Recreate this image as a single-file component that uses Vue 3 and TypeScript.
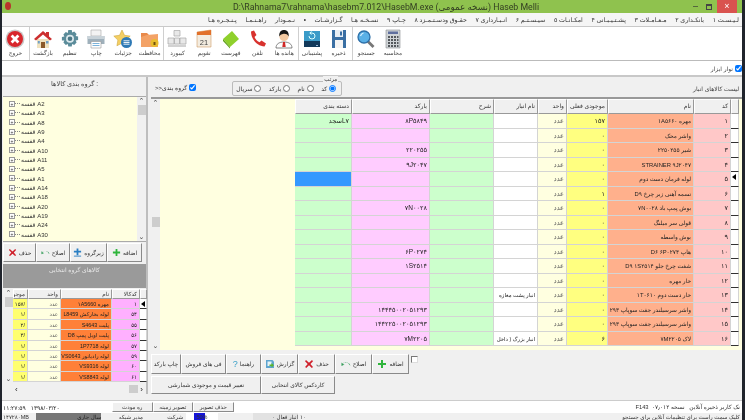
<script setup lang="ts">
interface Tool { label: string; icon: string }
interface Row { code: string; name: string; qty: string; store?: string; barcode?: string; category?: string; selected?: boolean }

const icons: Record<string, string> = {
  exit: '<circle cx="10" cy="10" r="9.500" fill="#c9c9c9"/><circle cx="10" cy="10" r="8" fill="#d8262c"/><path d="M6.600 6.600l6.800 6.800M13.400 6.600l-6.800 6.800" stroke="#fff" stroke-width="2.800"/>',
  home: '<path d="M4 10h12v9H4z" fill="#efe2bf"/><path d="M1 10L10 2l3 2.600V3h3v4.400L19 10l-2 1.600L10 5.600 3 11.600z" fill="#cc2f2f"/><path d="M8 13h4v6H8z" fill="#8a5a2b"/><path d="M13 12h2.500v2.500H13zM4.800 12h2v2.500h-2z" fill="#6d9fc9"/>',
  gear: '<path d="M8.300 1h3.400l.5 2.500 2-.9 2.400 2.400-1 2 2.500.5v3.400l-2.500.6 1 2-2.400 2.400-2-1-.5 2.600H8.300l-.5-2.600-2 1-2.400-2.400 1-2L1.900 11.400V8l2.500-.5-1-2L5.800 3.100l2 .9z" fill="#5b8c9a"/><circle cx="10" cy="9.700" r="4" fill="#dbe8ec"/><circle cx="10" cy="9.700" r="2.300" fill="#4b7886"/>',
  print: '<path d="M5 1h10v6H5z" fill="#f3f3f3" stroke="#aaa" stroke-width=".6"/><path d="M1.500 7h17v8h-17z" fill="#9fb0bb"/><path d="M1.500 7h17v3h-17z" fill="#c8d2d8"/><path d="M5 12.500h10V19H5z" fill="#fff" stroke="#999" stroke-width=".6"/><path d="M6.500 14.500h7M6.500 16.500h7" stroke="#5aa0d0" stroke-width=".8"/>',
  star: '<path d="M9 1l2.500 5.300 5.700.8-4.100 4 1 5.700L9 14.100l-5.100 2.700 1-5.700-4.100-4 5.700-.8z" fill="#f4cf63" stroke="#c79a2a" stroke-width=".5"/><circle cx="13.500" cy="13.500" r="5.500" fill="#2e79b5"/><path d="M10.500 11.800h6M10.500 13.500h6M10.500 15.200h6" stroke="#fff" stroke-width=".9"/>',
  folder: '<path d="M1 4h6l2 2h9v12H1z" fill="#e98a4b"/><path d="M1 8l6-2 11-1v13H1z" fill="#f3a267"/><circle cx="14.500" cy="14" r="4" fill="#e8bd2e"/><path d="M13.500 13h2v3h-2z" fill="#70500f"/>',
  keys: '<path d="M7 1.500h6V7H7zM1 9h6v6H1zM7.500 9h5v6h-5zM13 9h6v6h-6z" fill="#e8e8e8" stroke="#a8a8a8" stroke-width=".7"/><path d="M1 15.500h18V18H1z" fill="#d2d2d2"/>',
  calendar: '<path d="M3 3l14-2v17H3z" fill="#f3ece0" stroke="#c78a4a" stroke-width=".5"/><path d="M3 3l14-2v5H3z" fill="#e2702a"/><text x="10" y="15.500" font-size="7.500" text-anchor="middle" fill="#444" font-family="Liberation Sans">21</text>',
  list: '<path d="M2 10L11 2l7 8-9 8z" fill="#8fd02c"/><path d="M2 10l7 8v1.500L2 12z" fill="#5f9e18"/>',
  phone: '<path d="M3 2.500l3-1 2.500 4.500-2 2c.8 2 2.500 4 5 5.300l2-1.800 4.500 3-1.500 3c-7-.6-13.500-7-13.500-15z" fill="#d8322e"/>',
  person: '<path d="M2 19c0-4 3-6 8-6s8 2 8 6z" fill="#fff" stroke="#555" stroke-width=".7"/><path d="M9 13h2l.7 5H8.300z" fill="#d02828"/><circle cx="10" cy="7.500" r="4.600" fill="#f2c8a0"/><path d="M5.200 7.500C5 3 7 1 10 1s5 2 4.800 6.500C13.500 5 11 4.600 9 5c-1.500.3-3 1-3.800 2.500z" fill="#151515"/>',
  backup: '<path d="M2 2h16v11H2z" fill="#3a9bc8"/><path d="M2 12h16v6H2z" fill="#12395a"/><path d="M14 16h2v1h-2z" fill="#9bd"/><path d="M7 7a3 3 0 1 0 3-3H8M9.500 2.500L7.800 4l1.700 1.500" fill="none" stroke="#dff" stroke-width="1"/>',
  save: '<path d="M3 1h14v18H3z" fill="#3a6fa3"/><path d="M6 1h8v7H6z" fill="#e8eef4"/><path d="M11 2.500h2v4h-2z" fill="#3a6fa3"/><path d="M6 11h8v8H6z" fill="#f4f4f4"/>',
  search: '<path d="M11.500 12l6 6" stroke="#777" stroke-width="2.800"/><circle cx="8" cy="8" r="6" fill="#5ab0e6" stroke="#2d6fa8" stroke-width="1.300"/><path d="M4.500 7a4 4 0 0 1 3-3" stroke="#d8f0ff" stroke-width="1.200" fill="none"/>',
  calc: '<path d="M3 1h14v18H3z" fill="#cfd3d6" stroke="#8b8f92" stroke-width=".6"/><path d="M5 2.500h10v2.500H5z" fill="#5f6f9e"/><path d="M5 7h2v2H5zM8 7h2v2H8zM11 7h2v2h-2zM14 7h1.500v2H14zM5 10h2v2H5zM8 10h2v2H8zM11 10h2v2h-2zM14 10h1.500v2H14zM5 13h2v2H5zM8 13h2v2H8zM11 13h2v2h-2zM14 13h1.500v2H14zM5 16h2v2H5zM8 16h2v2H8zM11 16h2v2h-2zM14 16h1.500v2H14z" fill="#54585c"/>',
  plus: '<path d="M8 2h4v6h6v4h-6v6H8v-6H2V8h6z" fill="#2fb53c"/>',
  plusBlue: '<path d="M8 1h4v5h6v4h-6v6H8v-6H2V6h6z" fill="#2a7fc4"/><path d="M2 17h16v2H2z" fill="#2a7fc4"/>',
  cross: '<path d="M4 2l6 5.500L16 2l2 2.500L12.800 10l5.200 6-2.300 2-5.700-5.500L4.500 18l-2.300-2 5.200-6L2 4.500z" fill="#cf1f2a"/>',
  undo: '<path d="M3 12a8 8 0 0 1 14-2l-4 1 6 3v-7l-2 2A10 10 0 0 0 1 13z" fill="#2f9a55" transform="matrix(-1 0 0 1 20 0)"/>',
  report: '<path d="M2 2h13l3 3v13H2z" fill="#5fa5cf"/><path d="M5 5h8v9H5z" fill="#e6f2f8"/><path d="M9 11h4V8l5 4.500-5 4.500v-3H9z" fill="#5ab52e"/>',
}

const toolGroups: Tool[][] = [
  [{ label: 'خروج', icon: 'exit' }],
  [
    { label: 'بازگشت', icon: 'home' },
    { label: 'تنظیم', icon: 'gear' },
    { label: 'چاپ', icon: 'print' },
    { label: 'جزئیات', icon: 'star' },
    { label: 'محافظت', icon: 'folder' },
  ],
  [
    { label: 'کیبورد', icon: 'keys' },
    { label: 'تقویم', icon: 'calendar' },
    { label: 'فهرست', icon: 'list' },
    { label: 'تلفن', icon: 'phone' },
    { label: 'هانده ها', icon: 'person' },
  ],
  [
    { label: 'پشتیبانی', icon: 'backup' },
    { label: 'ذخیره', icon: 'save' },
  ],
  [
    { label: 'جستجو', icon: 'search' },
    { label: 'محاسبه', icon: 'calc' },
  ],
]

const menu = ['لـیـسـت ۱', 'بانکـداری ۲', 'مـعـامـلات ۳', 'پشـتـیـبـانی ۴', 'امکـانـات ۵', 'سیـسـتـم ۶', 'انـبـارداری ۷', 'حقـوق ودسـتـمـزد ۸', 'چـاپ ۹', 'نسـخـه هـا', 'گـزارشـات', '•', 'نـمـودار', 'راهـنـمـا', 'پـنـجـره هـا']

const shelves = ['A2', 'A3', 'A8', 'A9', 'A4', 'A10', 'A11', 'A5', 'A1', 'A14', 'A18', 'A20', 'A19', 'A24', 'A30', 'A32']

const rows: Row[] = [
  { code: '۱', name: 'مهره ۱A۵۶۶۰', qty: '۱۵۷', barcode: '۸P۵۸۴۹', category: 'L۷سجد' },
  { code: '۲', name: 'واشر محک', qty: '۰' },
  { code: '۳', name: 'شیر ۲۲۵۰۲۵۵', qty: '۰', barcode: '۲۲۰۲۵۵' },
  { code: '۴', name: 'STRAINER ۹J۲۰۴۷', qty: '۰', barcode: '۹J۲۰۴۷' },
  { code: '۵', name: 'لوله فرمان دست دوم', qty: '۰', selected: true },
  { code: '۶', name: 'تسمه آهنی زیر چرخ D۹', qty: '۱' },
  { code: '۷', name: 'بوش پمپ باد ۷N۰۰۲۸', qty: '۰', barcode: '۷N۰۰۲۸' },
  { code: '۸', name: 'قولی سر میلنگ', qty: '۰' },
  { code: '۹', name: 'بوش واسطه', qty: '۰' },
  { code: '۱۰', name: 'هاپ D۶ ۶P۰۲۷۴', qty: '۰', barcode: '۶P۰۲۷۴' },
  { code: '۱۱', name: 'شفت چرخ جلو D۹ ۱S۲۵۱۴', qty: '۰', barcode: '۱S۲۵۱۴' },
  { code: '۱۲', name: 'خار مهره', qty: '۰' },
  { code: '۱۳', name: 'خار دست دوم ۱T۰۶۱۰', qty: '۰', store: 'انبار پشت مغازه' },
  { code: '۱۴', name: 'واشر سرسیلندر جفت سوپاپ ۲۹۳', qty: '۰', barcode: '۱۴۴۴۵۰۰۲۰۵۱۲۹۳' },
  { code: '۱۵', name: 'واشر سرسیلندر جفت سوپاپ ۲۹۳', qty: '۰', barcode: '۱۴۴۲۲۵۰۰۲۰۵۱۲۹۳' },
  { code: '۱۶', name: 'لاک ۷M۲۲۰۵', qty: '۶', store: 'انبار بزرگ ( داخل', barcode: '۷M۲۲۰۵' },
]

const groupRows = [
  { code: '۱', name: 'مهره ۱A5660', qty: '/۱۵۷' },
  { code: '۵۴', name: 'لوله بخارکش L8459', qty: '/۱' },
  { code: '۵۵', name: 'پلیت S4643', qty: '/۲' },
  { code: '۵۶', name: 'پلیت اویل پمپ D8', qty: '/۳' },
  { code: '۵۷', name: 'لوله 1P7718', qty: '/۱' },
  { code: '۵۹', name: 'لوله رادیاتور VS0643', qty: '/۱' },
  { code: '۶۰', name: 'لوله VS9316', qty: '/۱' },
  { code: '۶۱', name: 'لوله VS8843', qty: '/۱' },
]

const gridHeads = ['دسته بندی', 'بارکد', 'شرح', 'نام انبار', 'واحد', 'موجودی فعلی', 'نام', 'کد']
const groupHeads = ['موجو', 'واحد', 'نام', 'کدکالا']
const treeButtons = [
  { label: 'حذف', icon: 'cross' },
  { label: 'اصلاح', icon: 'undo' },
  { label: 'زیرگروه', icon: 'plusBlue' },
  { label: 'اضافه', icon: 'plus' },
]
const actions = [
  { label: 'چاپ بارکد' },
  { label: 'فی های فروش' },
  { label: 'راهنما', mark: '?' },
  { label: 'گزارش', icon: 'report' },
  { label: 'حذف', icon: 'cross' },
  { label: 'اصلاح', icon: 'undo' },
  { label: 'اضافه', icon: 'plus' },
]
const radios = [
  { label: 'سریال', on: false },
  { label: 'بارکد', on: false },
  { label: 'نام', on: false },
  { label: 'کد', on: true },
]
</script>

<template>
  <div class="desktop">
    <div class="window">
      <header class="titlebar">
        <span class="app-dot"></span>
        <span class="title-text">D:\Rahnama7\rahnama\hasebm7.012\HasebM.exe (نسخه عمومی) Haseb Melli</span>
        <div class="win-controls">
          <span class="win-btn">–</span>
          <span class="win-btn restore"></span>
          <span class="win-btn close">×</span>
        </div>
      </header>

      <nav class="menu">
        <span v-for="m in menu" :key="m">{{ m }}</span>
      </nav>

      <div class="toolbar">
        <div v-for="(group, i) in toolGroups" :key="i" class="tool-group">
          <div v-for="t in group" :key="t.label" class="tool">
            <svg viewBox="0 0 20 20" width="20" height="20" v-html="icons[t.icon]"></svg>
            <span>{{ t.label }}</span>
          </div>
        </div>
      </div>

      <div class="toolbar-toggle">
        <span>نوار ابزار</span>
        <input type="checkbox" checked />
      </div>

      <main class="main">
        <aside class="left">
          <div class="left-head">گروه بندی کالاها :</div>
          <div class="tree">
            <div class="tree-list">
              <div v-for="s in shelves" :key="s" class="tree-row">
                <span class="expander">+</span>
                <span class="dash"></span>
                <span dir="rtl">{{ s }} قفسه</span>
              </div>
            </div>
            <div class="vscroll">
              <span class="arrow">⌃</span>
              <span class="thumb top"></span>
              <span class="arrow down">⌄</span>
            </div>
          </div>
          <div class="tree-buttons">
            <button v-for="b in treeButtons" :key="b.label" class="btn">
              <svg viewBox="0 0 20 20" width="9" height="9" v-html="icons[b.icon]"></svg>
              {{ b.label }}
            </button>
          </div>
          <div class="group-title">کالاهای گروه انتخابی</div>
          <div class="group-grid">
            <div class="group-scroll">
              <span class="arrow">⌃</span>
              <span class="thumb"></span>
              <span class="arrow down">⌄</span>
            </div>
            <div class="group-table">
              <div v-for="h in groupHeads" :key="h" class="head">{{ h }}</div>
              <div class="head blank"></div>
              <template v-for="(r, i) in groupRows" :key="r.code">
                <div class="gc qty">{{ r.qty }}</div>
                <div class="gc unit">عدد</div>
                <div class="gc gname">{{ r.name }}</div>
                <div class="gc gcode">{{ r.code }}</div>
                <div class="gc mark"><i v-if="i === 0"></i></div>
              </template>
            </div>
          </div>
          <div class="hscroll">
            <span>‹</span>
            <span class="hthumb"></span>
            <span>›</span>
          </div>
        </aside>

        <section class="right">
          <div class="right-head">
            <label class="group-check">
              <span dir="rtl">گروه بندی&lt;&lt;</span>
              <input type="checkbox" checked />
            </label>
            <fieldset class="sort">
              <legend>مرتب</legend>
              <label v-for="r in radios" :key="r.label">
                <span>{{ r.label }}</span>
                <input type="radio" name="sort" :checked="r.on" />
              </label>
            </fieldset>
            <div class="list-title">لیست کالاهای انبار</div>
          </div>

          <div class="grid-wrap">
            <div class="side-scroll">
              <span class="arrow">⌃</span>
              <span class="thumb mid"></span>
              <span class="arrow down">⌄</span>
            </div>
            <div class="empty"></div>
            <div class="items">
              <div v-for="h in gridHeads" :key="h" class="head">{{ h }}</div>
              <div class="head blank"></div>
              <template v-for="r in rows" :key="r.code">
                <div class="c category" :class="{ selected: r.selected }">{{ r.category }}</div>
                <div class="c barcode">{{ r.barcode }}</div>
                <div class="c desc"></div>
                <div class="c store">{{ r.store }}</div>
                <div class="c unit">عدد</div>
                <div class="c stock">{{ r.qty }}</div>
                <div class="c iname">{{ r.name }}</div>
                <div class="c icode">{{ r.code }}</div>
                <div class="c mark"><i v-if="r.selected"></i></div>
              </template>
            </div>
          </div>

          <div class="actions">
            <div class="action-grid">
              <button v-for="a in actions" :key="a.label" class="btn">
                <span v-if="a.mark" class="help">{{ a.mark }}</span>
                <svg v-if="a.icon" viewBox="0 0 20 20" width="10" height="10" v-html="icons[a.icon]"></svg>
                {{ a.label }}
              </button>
              <button class="btn wide-a">تغییر قیمت و موجودی شمارشی</button>
              <button class="btn wide-b">کاردکس کالای انتخابی</button>
            </div>
            <input class="action-check" type="checkbox" />
          </div>
        </section>
      </main>

      <div class="strip">
        <span class="clock">۱۱:۲۷:۵۹ &nbsp; ۱۳۹۸/۰۳/۲۰</span>
        <button class="btn small">ره مودت</button>
        <button class="btn small">تصویر زمینه</button>
        <button class="btn small">حذف تصویر</button>
        <span class="version" dir="rtl">نک کاربر ذخیره آنلاین &nbsp; نسخه ۰۷٫۰۱۲ &nbsp;F143</span>
      </div>

      <footer class="status">
        <span class="s-size">۱۴۷۲۸۰MB</span>
        <span class="s-year">سال جاری</span>
        <span class="s-admin">مدیر شبکه</span>
        <span class="s-co">شرکت</span>
        <span class="s-progress"><i></i>50%</span>
        <span class="s-store">انبار فعال ۰</span>
        <span class="s-num">۱۰</span>
        <span class="s-hint" dir="rtl">کلیک سمت راست برای تنظیمات آنلاین برای جستجو</span>
      </footer>
    </div>
  </div>
</template>

<style scoped>
.desktop {
  width: 745px;
  height: 420px;
  overflow: hidden;
  padding: 0 3px 0 2px;
  box-sizing: border-box;
  background: #20242c;
  font-family: "Liberation Sans", "DejaVu Sans", sans-serif;
  font-size: 7px;
  color: #222;
  filter: blur(0.3px);
}
.window {
  height: 420px;
  display: flex;
  flex-direction: column;
  background: #f0f0f0;
}
.titlebar {
  height: 13px;
  flex: none;
  position: relative;
  display: flex;
  align-items: center;
  justify-content: center;
  background: #8fc24e;
  color: #333f22;
}
.title-text {
  font-family: Roboto, "DejaVu Sans", sans-serif;
  font-size: 8.75px;
  margin-left: 28px;
}
.app-dot {
  position: absolute;
  left: 3px;
  top: 2px;
  width: 6px;
  height: 8px;
  border-radius: 50%;
  background: #b8342c;
}
.win-controls {
  position: absolute;
  right: 0;
  top: 0;
  height: 13px;
  display: flex;
}
.win-btn {
  width: 13px;
  text-align: center;
  font-size: 9px;
  line-height: 13px;
  color: #333;
}
.win-btn.restore {
  position: relative;
}
.win-btn.restore::after {
  content: "";
  position: absolute;
  left: 4px;
  top: 4px;
  width: 4px;
  height: 3px;
  border: 1px solid #444;
  border-top-width: 2px;
}
.win-btn.close {
  width: 20px;
  margin: 0 5px 0 2px;
  background: #d9534f;
  color: #fff;
}
.menu {
  height: 14px;
  flex: none;
  display: flex;
  direction: rtl;
  align-items: center;
  gap: 8.6px;
  padding-right: 3px;
  background: #f5f5f5;
  border-bottom: 1px solid #c9c9c9;
  box-sizing: border-box;
  font-size: 6.3px;
  color: #333;
  white-space: nowrap;
}
.toolbar {
  height: 34px;
  flex: none;
  display: flex;
  background: #fff;
  border-bottom: 1px solid #bbb;
  box-sizing: border-box;
}
.tool-group {
  display: flex;
  border-right: 1px solid #cfcfcf;
  padding-top: 2px;
}
.tool-group:last-child {
  border-right: 0;
}
.tool {
  width: 26.7px;
  display: flex;
  flex-direction: column;
  align-items: center;
  font-size: 5.8px;
  color: #444;
  white-space: nowrap;
}
.tool span {
  margin-top: 1px;
}
.toolbar-toggle {
  height: 14px;
  flex: none;
  display: flex;
  justify-content: flex-end;
  align-items: center;
  gap: 2px;
  background: #fff;
  font-size: 6px;
  color: #444;
}
input[type="checkbox"],
input[type="radio"] {
  width: 7px;
  height: 7px;
  margin: 0;
  flex: none;
}
.main {
  height: 319px;
  flex: none;
  display: flex;
  gap: 2px;
  border-top: 2px solid #c8c8c8;
  box-sizing: border-box;
}
.left {
  width: 146px;
  flex: none;
  border-right: 2px solid #bdbdbd;
  box-sizing: border-box;
  padding-left: 1px;
  display: flex;
  flex-direction: column;
}
.left-head {
  height: 20px;
  flex: none;
  text-align: center;
  padding-top: 3px;
  box-sizing: border-box;
  font-size: 6.5px;
  color: #444;
  border-bottom: 1px solid #aaa;
}
.tree {
  height: 144px;
  flex: none;
  display: flex;
  overflow: hidden;
}
.tree-list {
  flex: 1;
  background: #ffffe0;
  padding: 2px 0 0 6px;
  overflow: hidden;
}
.tree-row {
  height: 9.33px;
  display: flex;
  align-items: center;
  color: #333;
  font-size: 6px;
}
.expander {
  width: 4px;
  height: 4px;
  border: 1px solid #999;
  font-size: 5px;
  line-height: 4px;
  text-align: center;
  background: #fff;
}
.dash {
  width: 5px;
  border-top: 1px dotted #888;
  margin-right: 1px;
}
.vscroll,
.side-scroll,
.group-scroll {
  width: 9px;
  flex: none;
  display: flex;
  flex-direction: column;
  align-items: center;
  background: #f0f0f0;
  color: #444;
  position: relative;
}
.arrow {
  font-size: 7px;
  line-height: 8px;
  height: 8px;
}
.arrow.down {
  margin-top: auto;
}
.thumb {
  width: 8px;
  height: 10px;
  background: #cdcdcd;
}
.thumb.mid {
  position: absolute;
  top: 118px;
}
.tree-buttons {
  height: 22px;
  flex: none;
  display: grid;
  grid-template-columns: 33px 34px 37px 35px;
  padding: 1px 3px 1px 0;
  box-sizing: border-box;
  border-top: 1px solid #aaa;
}
.btn {
  margin: 0;
  padding: 0;
  border: 1px solid;
  border-color: #fff #8a8a8a #8a8a8a #fff;
  background: #f0f0f0;
  font: inherit;
  font-size: 5.8px;
  color: #333;
  display: flex;
  align-items: center;
  justify-content: center;
  gap: 2px;
  white-space: nowrap;
}
.group-title {
  height: 24px;
  flex: none;
  margin: 1px 0;
  background: #9a9a9a;
  color: #e8e8e8;
  text-align: center;
  font-size: 6px;
  padding-top: 2px;
  box-sizing: border-box;
}
.group-grid {
  height: 94px;
  flex: none;
  display: flex;
  padding-left: 1px;
}
.group-table {
  display: grid;
  grid-template-columns: 15px 33px 51px 28px 7px;
  grid-template-rows: 10px repeat(8, 10.4px);
  direction: ltr;
}
.head {
  background: #f0f0f0;
  border: 1px solid;
  border-color: #fff #999 #999 #fff;
  box-sizing: border-box;
  direction: rtl;
  text-align: right;
  padding-right: 2px;
  font-size: 5.6px;
  line-height: 8px;
  color: #333;
  white-space: nowrap;
  overflow: hidden;
}
.head.blank {
  padding: 0;
}
.gc,
.c {
  direction: rtl;
  text-align: right;
  padding-right: 2px;
  box-sizing: border-box;
  white-space: nowrap;
  overflow: hidden;
  color: #222;
  border-bottom: 1px solid #d4d4d4;
  border-right: 1px solid #d4d4d4;
}
.gc {
  font-size: 5.4px;
  line-height: 10px;
}
.qty {
  background: #ffff70;
}
.unit {
  background: #ffffe0;
  color: #555;
}
.gname {
  background: #ff8038;
}
.gcode {
  background: #ffb0ff;
}
.mark {
  background: #fff;
  border-bottom: 1px solid #333;
  padding: 0;
  position: relative;
}
.mark i {
  position: absolute;
  left: 1px;
  top: 2px;
  border: 3px solid transparent;
  border-left: 0;
  border-right: 4px solid #000;
}
.hscroll {
  height: 10px;
  flex: none;
  margin: 1px 3px 0 12px;
  display: flex;
  align-items: center;
  justify-content: space-between;
  font-size: 8px;
  position: relative;
}
.hthumb {
  width: 9px;
  height: 8px;
  background: #cdcdcd;
  margin-left: auto;
  margin-right: 2px;
}
.right {
  flex: 1;
  min-width: 0;
  display: flex;
  flex-direction: column;
}
.right-head {
  height: 20px;
  flex: none;
  display: flex;
  align-items: center;
  padding-right: 3px;
  position: relative;
}
.group-check {
  display: flex;
  align-items: center;
  gap: 2px;
  margin-left: 5px;
  font-size: 6px;
  color: #333;
}
.sort {
  width: 110px;
  height: 15px;
  margin: 3px 0 0 36px;
  padding: 0 2px 0 0;
  box-sizing: border-box;
  border: 1px solid #bbb;
  border-radius: 2px;
  display: flex;
  justify-content: space-between;
  align-items: center;
  font-size: 6px;
  color: #333;
  position: relative;
}
.sort legend {
  position: absolute;
  right: 3px;
  top: -6px;
  padding: 0 1px;
  background: #f0f0f0;
  font-size: 5.5px;
  line-height: 6px;
}
.sort label {
  display: flex;
  align-items: center;
  gap: 2px;
  padding: 0 3px;
}
.list-title {
  margin-left: auto;
  font-size: 6px;
  color: #444;
  padding-top: 3px;
}
.grid-wrap {
  height: 253px;
  flex: none;
  display: flex;
  margin-left: 1px;
  border-top: 2px solid #999;
  background: #ffffe0;
  box-sizing: border-box;
}
.empty {
  width: 135px;
  flex: none;
  background: #ffffe0;
}
.items {
  display: grid;
  grid-template-columns: 57px 78px 64px 44px 29px 41px 86px 37px 8px;
  grid-template-rows: 15px repeat(16, 14.5px);
  align-self: flex-start;
}
.items .head {
  font-size: 6px;
  line-height: 13px;
}
.c {
  font-size: 6.5px;
  line-height: 14px;
}
.category,
.desc {
  background: #ccffcc;
}
.selected {
  background: #3399ff;
}
.barcode {
  background: #ffccff;
}
.store {
  background: #fff;
  font-size: 5.4px;
}
.stock {
  background: #ffff80;
}
.iname {
  background: #ffb08c;
  font-size: 5.8px;
}
.icode {
  background: #ffc8c8;
}
.actions {
  flex: 1;
  display: flex;
  align-items: flex-start;
  margin-left: 1px;
  padding-top: 4px;
}
.action-grid {
  display: grid;
  grid-template-columns: 30px 45px 35px 37px 37px 37px 37px;
  grid-template-rows: 20px 18px;
  row-gap: 2px;
}
.wide-a {
  grid-column: 1 / 4;
}
.wide-b {
  grid-column: 4 / 6;
}
.help {
  color: #3aa0c8;
  font-size: 9px;
}
.action-check {
  appearance: none;
  margin: 2px 0 0 2px !important;
  background: #fff;
  border: 1px solid;
  border-color: #777 #ddd #ddd #777;
  box-sizing: border-box;
}
.strip {
  height: 13px;
  flex: none;
  margin-top: 6px;
  display: flex;
  align-items: center;
  background: #fff;
  border-top: 1px solid #ccc;
  box-sizing: border-box;
  font-size: 6px;
}
.clock {
  width: 110px;
  padding-left: 1px;
  box-sizing: border-box;
  direction: ltr;
}
.btn.small {
  width: 40.5px;
  height: 10px;
  font-size: 5.5px;
}
.version {
  margin-left: auto;
  padding-right: 2px;
  font-size: 5.8px;
  color: #333;
}
.status {
  height: 7px;
  flex: none;
  display: flex;
  font-size: 5.5px;
  line-height: 8px;
  overflow: hidden;
  white-space: nowrap;
  color: #333;
}
.s-size {
  width: 33px;
  padding-left: 1px;
}
.s-year {
  width: 65px;
  background: #777;
  color: #222;
  text-align: right;
}
.s-admin {
  width: 42px;
  text-align: right;
}
.s-co {
  width: 40px;
  text-align: right;
}
.s-progress {
  width: 32px;
  margin-left: 3px;
  position: relative;
  background: #fff;
  text-align: center;
  z-index: 0;
}
.s-progress i {
  position: absolute;
  left: 8px;
  top: 0;
  width: 11px;
  height: 8px;
  background: #1414d8;
  z-index: -1;
}
.s-store {
  width: 45px;
  margin-left: 35px;
  text-align: right;
  background: #e2e2e2;
}
.s-num {
  width: 50px;
  margin-left: 2px;
}
.s-hint {
  margin-left: auto;
  padding-right: 2px;
}
</style>

<style>
html,
body {
  margin: 0;
  background: #20242c;
}
</style>
